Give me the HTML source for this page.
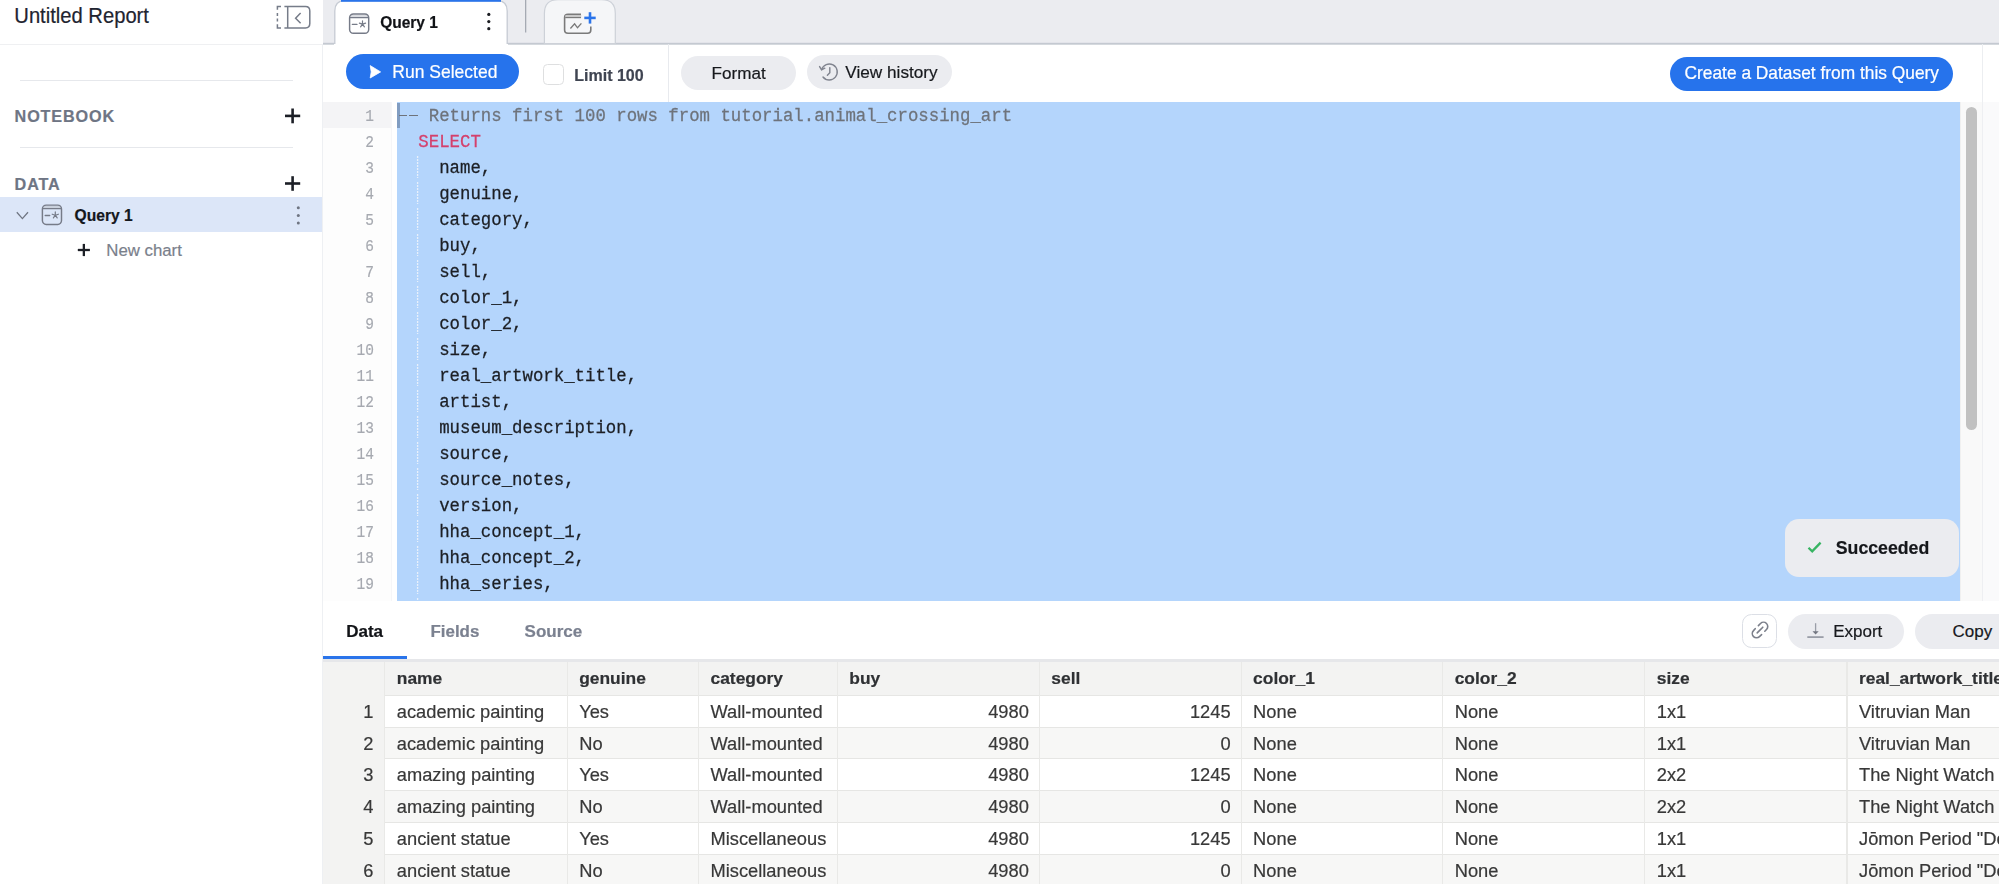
<!DOCTYPE html>
<html><head><meta charset="utf-8">
<style>
*{box-sizing:border-box;margin:0;padding:0}
html,body{width:1999px;height:884px;overflow:hidden;background:#fff;font-family:"Liberation Sans",sans-serif;color:#1f2329}
.a{position:absolute}
.t{position:absolute;white-space:nowrap;line-height:20px;-webkit-text-stroke:0.2px currentColor}
body{-webkit-font-smoothing:antialiased}
#wrap{position:absolute;left:0;top:0;width:1999px;height:884px;opacity:0.999}
.m{position:absolute;white-space:pre;font-family:"Liberation Mono",monospace;line-height:20px;-webkit-text-stroke:0.25px currentColor}
</style></head>
<body><div id="wrap">
<div class="a" style="left:0px;top:0px;width:323px;height:884px;background:#fff;"></div>
<div class="a" style="left:322px;top:44px;width:1px;height:840px;background:#eef0f3;"></div>
<div class="a" style="left:0px;top:43.5px;width:322px;height:1px;background:#eff0f2;"></div>
<div class="a" style="left:20px;top:79.5px;width:273px;height:1.5px;background:#e6e8ec;"></div>
<div class="a" style="left:20px;top:146.5px;width:273px;height:1.5px;background:#e6e8ec;"></div>
<div class="a" style="left:0px;top:197.3px;width:322px;height:34.5px;background:#dce6f8;"></div>
<div class="t" style="left:14.30px;top:6.20px;font-size:20.2px;color:#1f2430;transform:scaleY(1.07);transform-origin:0 17.00px">Untitled Report</div>
<div class="t" style="left:14.60px;top:106.19px;font-size:16.2px;color:#6e7584;font-weight:bold;letter-spacing:0.85px">NOTEBOOK</div>
<div class="t" style="left:14.60px;top:173.89px;font-size:16.2px;color:#6e7584;font-weight:bold;letter-spacing:0.85px">DATA</div>
<div class="t" style="left:74.60px;top:206.19px;font-size:15.6px;color:#14171c;font-weight:bold">Query 1</div>
<div class="t" style="left:106.30px;top:240.98px;font-size:16.8px;color:#7a808b">New chart</div>
<svg class="a" style="left:0;top:0" width="323" height="270" viewBox="0 0 323 270">
  <g stroke="#1c1f26" stroke-width="2.6"><line x1="285" y1="115.9" x2="300.2" y2="115.9"/><line x1="292.6" y1="108.5" x2="292.6" y2="123.3"/></g>
  <g stroke="#1c1f26" stroke-width="2.6"><line x1="285" y1="183.5" x2="300.2" y2="183.5"/><line x1="292.6" y1="176.2" x2="292.6" y2="190.8"/></g>
  <path d="M16.8 212.3 L22.4 218.6 L28 212.3" fill="none" stroke="#6f7582" stroke-width="1.3"/>
  <g transform="translate(-307.2 191.1)"><g fill="none" stroke="#767b88" stroke-linecap="round">
  <rect x="350.6" y="14.7" width="17.4" height="2.6" fill="#c9d0dc" stroke="none"/>
  <rect x="349.6" y="14" width="19.1" height="19.3" rx="3.8" stroke-width="1.45"/>
  <line x1="350.3" y1="17.6" x2="368.2" y2="17.6" stroke-width="1.25"/>
  <line x1="352.4" y1="24.4" x2="356.9" y2="24.4" stroke-width="1.4"/>
  <path d="M362.5 24.1 L362.5 20.8 M362.5 24.1 L365.6 23.1 M362.5 24.1 L364.4 26.8 M362.5 24.1 L360.6 26.8 M362.5 24.1 L359.4 23.1" stroke-width="1.2"/>
</g></g>
  <circle cx="298.3" cy="207.8" r="1.5" fill="#6f7582"/><circle cx="298.3" cy="215.5" r="1.5" fill="#6f7582"/><circle cx="298.3" cy="223" r="1.5" fill="#6f7582"/>
  <g stroke="#1c1f26" stroke-width="2.3"><line x1="77.8" y1="250" x2="89.9" y2="250"/><line x1="83.85" y1="243.9" x2="83.85" y2="256.1"/></g>
  <g fill="none" stroke="#767c89" stroke-width="1.5">
    <path d="M281 6.5 L277.4 6.5 L277.4 9.7 M277.4 13.1 L277.4 16 M277.4 18.4 L277.4 21.4 M277.4 24.2 L277.4 27.9 L281 27.9"/>
    <path d="M284.4 6.6 L305.5 6.6 Q309.8 6.6 309.8 11 L309.8 23.6 Q309.8 28 305.5 28 L284.4 28"/>
    <line x1="287.7" y1="6.6" x2="287.7" y2="28"/>
    <path d="M300.6 13 L295.6 18.2 L300.6 23.2"/>
  </g>
</svg>
<svg class="a" style="left:0;top:0" width="1999" height="46" viewBox="0 0 1999 46">
  <rect x="323" y="0" width="1676" height="44" fill="#ebecf0"/>
  <rect x="323" y="42.8" width="1676" height="1.9" fill="#c4c9d1"/>
  <path d="M334.8 46 L334.8 11 Q334.8 0.6 345 0.6 L497 0.6 Q507.2 0.6 507.2 11 L507.2 46 Z" fill="#fff" stroke="#c6cbd3" stroke-width="1.3"/>
  <rect x="334" y="44" width="174" height="2" fill="#fff"/>
  <rect x="341" y="0" width="160" height="1.8" fill="#2a74ea"/>
  <rect x="525" y="0" width="1.3" height="32.5" fill="#a5aab3"/>
  <path d="M544.4 43.5 L544.4 13.5 Q544.4 -0.3 558 -0.3 L601.7 -0.3 Q615.3 -0.3 615.3 13.5 L615.3 43.5 Z" fill="#f5f6f8" stroke="#cdd1d8" stroke-width="1.2"/>
  <g fill="none" stroke="#767b88" stroke-linecap="round">
  <rect x="350.6" y="14.7" width="17.4" height="2.6" fill="#d9dbe0" stroke="none"/>
  <rect x="349.6" y="14" width="19.1" height="19.3" rx="3.8" stroke-width="1.45"/>
  <line x1="350.3" y1="17.6" x2="368.2" y2="17.6" stroke-width="1.25"/>
  <line x1="352.4" y1="24.4" x2="356.9" y2="24.4" stroke-width="1.4"/>
  <path d="M362.5 24.1 L362.5 20.8 M362.5 24.1 L365.6 23.1 M362.5 24.1 L364.4 26.8 M362.5 24.1 L360.6 26.8 M362.5 24.1 L359.4 23.1" stroke-width="1.2"/>
</g>
  <circle cx="488.8" cy="14.4" r="1.6" fill="#1b1d22"/><circle cx="488.8" cy="21.55" r="1.6" fill="#1b1d22"/><circle cx="488.8" cy="28.7" r="1.6" fill="#1b1d22"/>
  <path d="M581 14.3 L568 14.3 Q564.6 14.3 564.6 17.7 L564.6 30 Q564.6 33.3 568 33.3 L587.6 33.3 Q590.8 33.3 590.8 30 L590.8 26.5" fill="none" stroke="#7a7a7a" stroke-width="1.6"/>
  <rect x="565.4" y="15" width="15.8" height="2.6" fill="#c9c9c9"/>
  <line x1="565.2" y1="17.6" x2="581" y2="17.6" stroke="#7a7a7a" stroke-width="1.15"/>
  <path d="M570.4 28.5 L574.6 23.9 L577.5 27.8 L581.4 23.4" fill="none" stroke="#7a7a7a" stroke-width="1.35"/>
  <g stroke="#2a74ea" stroke-width="2.6"><line x1="584.3" y1="17.9" x2="595.7" y2="17.9"/><line x1="590" y1="12.2" x2="590" y2="23.6"/></g>
</svg>
<div class="t" style="left:380.20px;top:12.63px;font-size:15.5px;color:#111317;transform:scaleY(1.06);transform-origin:0 15.37px;font-weight:bold">Query 1</div>
<div class="a" style="left:345.9px;top:54.4px;width:173.2px;height:35px;background:#2673ec;border-radius:17.5px"></div>
<svg class="a" style="left:367px;top:64px" width="16" height="16" viewBox="0 0 16 16"><path d="M3.2 1.6 L13.6 7.9 L3.2 14.0 L4.2 7.9 Z" fill="#fff" stroke="#fff" stroke-width="0.8" stroke-linejoin="round"/></svg>
<div class="t" style="left:392.30px;top:61.94px;font-size:17.5px;color:#fff">Run Selected</div>
<div class="a" style="left:542.6px;top:63.6px;width:21px;height:21px;background:#fff;border-radius:4.5px;border:1.3px solid #dedfe0"></div>
<div class="t" style="left:574.30px;top:66.46px;font-size:16.0px;color:#3f4451;font-weight:bold">Limit 100</div>
<div class="a" style="left:668px;top:44px;width:1px;height:58px;background:#e8eaee;"></div>
<div class="a" style="left:681px;top:56.3px;width:115px;height:34.2px;background:#ebecf0;border-radius:17.1px"></div>
<div class="t" style="left:711.50px;top:64.37px;font-size:17.1px;color:#17191d">Format</div>
<div class="a" style="left:807.3px;top:54.8px;width:145px;height:34.6px;background:#ebecf0;border-radius:17.3px"></div>
<svg class="a" style="left:817px;top:60px" width="24" height="24" viewBox="0 0 24 24"><g fill="none" stroke="#80848f" stroke-width="1.45" stroke-linecap="round"><path d="M4.6 9.6 A8 8 0 1 1 6 17"/><path d="M2.6 6.6 L4.6 9.8 L7.8 8.2"/><path d="M12.8 7.6 L12.8 12.8 L10.4 15.2"/></g></svg>
<div class="t" style="left:845.30px;top:62.04px;font-size:17.2px;color:#17191d">View history</div>
<div class="a" style="left:1670px;top:56.6px;width:283px;height:34.3px;background:#2673ec;border-radius:17.2px"></div>
<div class="t" style="left:1684.50px;top:63.29px;font-size:17.35px;color:#fff;transform:scaleY(1.07);transform-origin:0 16.01px">Create a Dataset from this Query</div>
<div class="a" style="left:1982px;top:44px;width:1px;height:58px;background:#eceef1;"></div>
<div class="a" style="left:323px;top:102px;width:69px;height:499px;background:#fdfdfd;"></div>
<div class="a" style="left:323px;top:102px;width:69px;height:26px;background:#f4f4f6;"></div>
<div class="a" style="left:391px;top:102px;width:1px;height:499px;background:#f6f6f8;"></div>
<div class="a" style="left:397px;top:102px;width:1563px;height:499px;background:#b4d5fc;"></div>
<div class="a" style="left:0;top:102px;width:1999px;height:499px;overflow:hidden">
<div class="m" style="right:1625.00px;top:5.14px;font-size:14.5px;color:#a6a9b0;transform:scaleY(1.16);transform-origin:0 13.86px;-webkit-text-stroke:0.15px currentColor">1</div>
<div class="m" style="left:397.5px;top:4.88px;font-size:17.37px;color:#6e737b;transform:scaleY(1.07);transform-origin:0 14.62px">   Returns first 100 rows from tutorial.animal_crossing_art</div>
<div class="m" style="right:1625.00px;top:31.14px;font-size:14.5px;color:#a6a9b0;transform:scaleY(1.16);transform-origin:0 13.86px;-webkit-text-stroke:0.15px currentColor">2</div>
<div class="m" style="left:397.5px;top:30.88px;font-size:17.37px;color:#d4406c;transform:scaleY(1.07);transform-origin:0 14.62px">  SELECT</div>
<div class="m" style="right:1625.00px;top:57.14px;font-size:14.5px;color:#a6a9b0;transform:scaleY(1.16);transform-origin:0 13.86px;-webkit-text-stroke:0.15px currentColor">3</div>
<div class="m" style="left:397.5px;top:56.88px;font-size:17.37px;color:#1c1f24;transform:scaleY(1.07);transform-origin:0 14.62px">    name,</div>
<svg class="a" style="left:416px;top:54px" width="4" height="22"><line x1="1.6" y1="0" x2="1.6" y2="22" stroke="#e8f0fb" stroke-width="1.3" stroke-dasharray="2 1"/></svg>
<div class="m" style="right:1625.00px;top:83.14px;font-size:14.5px;color:#a6a9b0;transform:scaleY(1.16);transform-origin:0 13.86px;-webkit-text-stroke:0.15px currentColor">4</div>
<div class="m" style="left:397.5px;top:82.88px;font-size:17.37px;color:#1c1f24;transform:scaleY(1.07);transform-origin:0 14.62px">    genuine,</div>
<svg class="a" style="left:416px;top:80px" width="4" height="22"><line x1="1.6" y1="0" x2="1.6" y2="22" stroke="#e8f0fb" stroke-width="1.3" stroke-dasharray="2 1"/></svg>
<div class="m" style="right:1625.00px;top:109.14px;font-size:14.5px;color:#a6a9b0;transform:scaleY(1.16);transform-origin:0 13.86px;-webkit-text-stroke:0.15px currentColor">5</div>
<div class="m" style="left:397.5px;top:108.88px;font-size:17.37px;color:#1c1f24;transform:scaleY(1.07);transform-origin:0 14.62px">    category,</div>
<svg class="a" style="left:416px;top:106px" width="4" height="22"><line x1="1.6" y1="0" x2="1.6" y2="22" stroke="#e8f0fb" stroke-width="1.3" stroke-dasharray="2 1"/></svg>
<div class="m" style="right:1625.00px;top:135.14px;font-size:14.5px;color:#a6a9b0;transform:scaleY(1.16);transform-origin:0 13.86px;-webkit-text-stroke:0.15px currentColor">6</div>
<div class="m" style="left:397.5px;top:134.88px;font-size:17.37px;color:#1c1f24;transform:scaleY(1.07);transform-origin:0 14.62px">    buy,</div>
<svg class="a" style="left:416px;top:132px" width="4" height="22"><line x1="1.6" y1="0" x2="1.6" y2="22" stroke="#e8f0fb" stroke-width="1.3" stroke-dasharray="2 1"/></svg>
<div class="m" style="right:1625.00px;top:161.14px;font-size:14.5px;color:#a6a9b0;transform:scaleY(1.16);transform-origin:0 13.86px;-webkit-text-stroke:0.15px currentColor">7</div>
<div class="m" style="left:397.5px;top:160.88px;font-size:17.37px;color:#1c1f24;transform:scaleY(1.07);transform-origin:0 14.62px">    sell,</div>
<svg class="a" style="left:416px;top:158px" width="4" height="22"><line x1="1.6" y1="0" x2="1.6" y2="22" stroke="#e8f0fb" stroke-width="1.3" stroke-dasharray="2 1"/></svg>
<div class="m" style="right:1625.00px;top:187.14px;font-size:14.5px;color:#a6a9b0;transform:scaleY(1.16);transform-origin:0 13.86px;-webkit-text-stroke:0.15px currentColor">8</div>
<div class="m" style="left:397.5px;top:186.88px;font-size:17.37px;color:#1c1f24;transform:scaleY(1.07);transform-origin:0 14.62px">    color_1,</div>
<svg class="a" style="left:416px;top:184px" width="4" height="22"><line x1="1.6" y1="0" x2="1.6" y2="22" stroke="#e8f0fb" stroke-width="1.3" stroke-dasharray="2 1"/></svg>
<div class="m" style="right:1625.00px;top:213.14px;font-size:14.5px;color:#a6a9b0;transform:scaleY(1.16);transform-origin:0 13.86px;-webkit-text-stroke:0.15px currentColor">9</div>
<div class="m" style="left:397.5px;top:212.88px;font-size:17.37px;color:#1c1f24;transform:scaleY(1.07);transform-origin:0 14.62px">    color_2,</div>
<svg class="a" style="left:416px;top:210px" width="4" height="22"><line x1="1.6" y1="0" x2="1.6" y2="22" stroke="#e8f0fb" stroke-width="1.3" stroke-dasharray="2 1"/></svg>
<div class="m" style="right:1625.00px;top:239.14px;font-size:14.5px;color:#a6a9b0;transform:scaleY(1.16);transform-origin:0 13.86px;-webkit-text-stroke:0.15px currentColor">10</div>
<div class="m" style="left:397.5px;top:238.88px;font-size:17.37px;color:#1c1f24;transform:scaleY(1.07);transform-origin:0 14.62px">    size,</div>
<svg class="a" style="left:416px;top:236px" width="4" height="22"><line x1="1.6" y1="0" x2="1.6" y2="22" stroke="#e8f0fb" stroke-width="1.3" stroke-dasharray="2 1"/></svg>
<div class="m" style="right:1625.00px;top:265.14px;font-size:14.5px;color:#a6a9b0;transform:scaleY(1.16);transform-origin:0 13.86px;-webkit-text-stroke:0.15px currentColor">11</div>
<div class="m" style="left:397.5px;top:264.88px;font-size:17.37px;color:#1c1f24;transform:scaleY(1.07);transform-origin:0 14.62px">    real_artwork_title,</div>
<svg class="a" style="left:416px;top:262px" width="4" height="22"><line x1="1.6" y1="0" x2="1.6" y2="22" stroke="#e8f0fb" stroke-width="1.3" stroke-dasharray="2 1"/></svg>
<div class="m" style="right:1625.00px;top:291.14px;font-size:14.5px;color:#a6a9b0;transform:scaleY(1.16);transform-origin:0 13.86px;-webkit-text-stroke:0.15px currentColor">12</div>
<div class="m" style="left:397.5px;top:290.88px;font-size:17.37px;color:#1c1f24;transform:scaleY(1.07);transform-origin:0 14.62px">    artist,</div>
<svg class="a" style="left:416px;top:288px" width="4" height="22"><line x1="1.6" y1="0" x2="1.6" y2="22" stroke="#e8f0fb" stroke-width="1.3" stroke-dasharray="2 1"/></svg>
<div class="m" style="right:1625.00px;top:317.14px;font-size:14.5px;color:#a6a9b0;transform:scaleY(1.16);transform-origin:0 13.86px;-webkit-text-stroke:0.15px currentColor">13</div>
<div class="m" style="left:397.5px;top:316.88px;font-size:17.37px;color:#1c1f24;transform:scaleY(1.07);transform-origin:0 14.62px">    museum_description,</div>
<svg class="a" style="left:416px;top:314px" width="4" height="22"><line x1="1.6" y1="0" x2="1.6" y2="22" stroke="#e8f0fb" stroke-width="1.3" stroke-dasharray="2 1"/></svg>
<div class="m" style="right:1625.00px;top:343.14px;font-size:14.5px;color:#a6a9b0;transform:scaleY(1.16);transform-origin:0 13.86px;-webkit-text-stroke:0.15px currentColor">14</div>
<div class="m" style="left:397.5px;top:342.88px;font-size:17.37px;color:#1c1f24;transform:scaleY(1.07);transform-origin:0 14.62px">    source,</div>
<svg class="a" style="left:416px;top:340px" width="4" height="22"><line x1="1.6" y1="0" x2="1.6" y2="22" stroke="#e8f0fb" stroke-width="1.3" stroke-dasharray="2 1"/></svg>
<div class="m" style="right:1625.00px;top:369.14px;font-size:14.5px;color:#a6a9b0;transform:scaleY(1.16);transform-origin:0 13.86px;-webkit-text-stroke:0.15px currentColor">15</div>
<div class="m" style="left:397.5px;top:368.88px;font-size:17.37px;color:#1c1f24;transform:scaleY(1.07);transform-origin:0 14.62px">    source_notes,</div>
<svg class="a" style="left:416px;top:366px" width="4" height="22"><line x1="1.6" y1="0" x2="1.6" y2="22" stroke="#e8f0fb" stroke-width="1.3" stroke-dasharray="2 1"/></svg>
<div class="m" style="right:1625.00px;top:395.14px;font-size:14.5px;color:#a6a9b0;transform:scaleY(1.16);transform-origin:0 13.86px;-webkit-text-stroke:0.15px currentColor">16</div>
<div class="m" style="left:397.5px;top:394.88px;font-size:17.37px;color:#1c1f24;transform:scaleY(1.07);transform-origin:0 14.62px">    version,</div>
<svg class="a" style="left:416px;top:392px" width="4" height="22"><line x1="1.6" y1="0" x2="1.6" y2="22" stroke="#e8f0fb" stroke-width="1.3" stroke-dasharray="2 1"/></svg>
<div class="m" style="right:1625.00px;top:421.14px;font-size:14.5px;color:#a6a9b0;transform:scaleY(1.16);transform-origin:0 13.86px;-webkit-text-stroke:0.15px currentColor">17</div>
<div class="m" style="left:397.5px;top:420.88px;font-size:17.37px;color:#1c1f24;transform:scaleY(1.07);transform-origin:0 14.62px">    hha_concept_1,</div>
<svg class="a" style="left:416px;top:418px" width="4" height="22"><line x1="1.6" y1="0" x2="1.6" y2="22" stroke="#e8f0fb" stroke-width="1.3" stroke-dasharray="2 1"/></svg>
<div class="m" style="right:1625.00px;top:447.14px;font-size:14.5px;color:#a6a9b0;transform:scaleY(1.16);transform-origin:0 13.86px;-webkit-text-stroke:0.15px currentColor">18</div>
<div class="m" style="left:397.5px;top:446.88px;font-size:17.37px;color:#1c1f24;transform:scaleY(1.07);transform-origin:0 14.62px">    hha_concept_2,</div>
<svg class="a" style="left:416px;top:444px" width="4" height="22"><line x1="1.6" y1="0" x2="1.6" y2="22" stroke="#e8f0fb" stroke-width="1.3" stroke-dasharray="2 1"/></svg>
<div class="m" style="right:1625.00px;top:473.14px;font-size:14.5px;color:#a6a9b0;transform:scaleY(1.16);transform-origin:0 13.86px;-webkit-text-stroke:0.15px currentColor">19</div>
<div class="m" style="left:397.5px;top:472.88px;font-size:17.37px;color:#1c1f24;transform:scaleY(1.07);transform-origin:0 14.62px">    hha_series,</div>
<svg class="a" style="left:416px;top:470px" width="4" height="22"><line x1="1.6" y1="0" x2="1.6" y2="22" stroke="#e8f0fb" stroke-width="1.3" stroke-dasharray="2 1"/></svg>
<div class="m" style="right:1625.00px;top:499.14px;font-size:14.5px;color:#a6a9b0;transform:scaleY(1.16);transform-origin:0 13.86px;-webkit-text-stroke:0.15px currentColor">20</div>
<div class="m" style="left:397.5px;top:498.88px;font-size:17.37px;color:#1c1f24;transform:scaleY(1.07);transform-origin:0 14.62px">    hha_set,</div>
<svg class="a" style="left:416px;top:496px" width="4" height="22"><line x1="1.6" y1="0" x2="1.6" y2="22" stroke="#e8f0fb" stroke-width="1.3" stroke-dasharray="2 1"/></svg>
</div>
<div class="a" style="left:397.4px;top:102.8px;width:2.4px;height:25.4px;background:rgba(60,80,115,0.42);"></div>
<div class="a" style="left:398.5px;top:114.6px;width:8.4px;height:1.5px;background:#6e737b;"></div>
<div class="a" style="left:409px;top:114.6px;width:8.6px;height:1.5px;background:#6e737b;"></div>
<div class="a" style="left:1960px;top:102px;width:22px;height:499px;background:#f9f9f9;border-left:1px solid #f0f0f0"></div>
<div class="a" style="left:1966px;top:107px;width:11px;height:323px;background:#c1c1c1;border-radius:6px"></div>
<div class="a" style="left:1982px;top:102px;width:17px;height:499px;background:#fafafb;border-left:1px solid #eeeff2"></div>
<div class="a" style="left:1785.2px;top:519px;width:173.8px;height:57.5px;background:#ebecf0;border-radius:14px"></div>
<svg class="a" style="left:1807px;top:539px" width="16" height="16" viewBox="0 0 16 16"><path d="M1.5 8.8 L5.2 12.4 L13.6 3.6" fill="none" stroke="#38b463" stroke-width="2.3"/></svg>
<div class="t" style="left:1835.80px;top:538.17px;font-size:17.7px;color:#15171b;font-weight:bold">Succeeded</div>
<div class="a" style="left:323px;top:601px;width:1676px;height:58px;background:#fff;"></div>
<div class="t" style="left:346.20px;top:622.11px;font-size:17.0px;color:#111317;font-weight:bold">Data</div>
<div class="t" style="left:430.50px;top:622.14px;font-size:16.9px;color:#7b8190;font-weight:bold">Fields</div>
<div class="t" style="left:524.60px;top:622.11px;font-size:17.0px;color:#7b8190;font-weight:bold">Source</div>
<div class="a" style="left:323px;top:656px;width:84px;height:3px;background:#2a74ea;"></div>
<div class="a" style="left:1742.2px;top:614px;width:35px;height:33.8px;background:#fff;border-radius:9.5px;border:1.3px solid #dcdfe6"></div>
<svg class="a" style="left:1749px;top:620px" width="22" height="22" viewBox="0 0 22 22"><g fill="none" stroke="#7b7f8a" stroke-width="1.6" stroke-linecap="round"><path d="M9.4 5.6 L11.5 3.5 A4.2 4.2 0 0 1 17.5 9.5 L15.8 11.2"/><path d="M12.6 14.6 L10.47 16.57 A4.2 4.2 0 0 1 4.53 10.63 L6.2 8.7"/><line x1="8.2" y1="12.9" x2="13.8" y2="7.2"/></g></svg>
<div class="a" style="left:1788px;top:613.5px;width:116px;height:35px;background:#ebecf0;border-radius:17.5px"></div>
<svg class="a" style="left:1805px;top:620px" width="20" height="20" viewBox="0 0 20 20"><line x1="10.6" y1="3.2" x2="10.6" y2="12" stroke="#9a9ea8" stroke-width="1.3"/><path d="M7.5 11.3 L13.7 11.3 L10.6 14.4 Z" fill="#737782"/><line x1="2.3" y1="17.1" x2="18.6" y2="17.1" stroke="#9a9ea8" stroke-width="1.8"/></svg>
<div class="t" style="left:1833.20px;top:622.21px;font-size:17.0px;color:#17191d">Export</div>
<div class="a" style="left:1915px;top:613.5px;width:130px;height:35px;background:#ebecf0;border-radius:17.5px"></div>
<div class="t" style="left:1952.50px;top:622.41px;font-size:17.0px;color:#17191d">Copy</div>
<div class="a" style="left:323px;top:659px;width:1676px;height:2.6px;background:#e6e7ea;"></div>
<div class="a" style="left:323px;top:661.5px;width:1676px;height:33px;background:#f3f3f2;"></div>
<div class="a" style="left:323px;top:661.5px;width:61.8px;height:223px;background:#f3f3f2;"></div>
<div class="a" style="left:384.8px;top:695px;width:1615px;height:33px;background:#ffffff;"></div>
<div class="a" style="left:384.8px;top:727px;width:1615px;height:33px;background:#f7f7f6;"></div>
<div class="a" style="left:384.8px;top:758px;width:1615px;height:33px;background:#ffffff;"></div>
<div class="a" style="left:384.8px;top:790px;width:1615px;height:33px;background:#f7f7f6;"></div>
<div class="a" style="left:384.8px;top:822px;width:1615px;height:33px;background:#ffffff;"></div>
<div class="a" style="left:384.8px;top:854px;width:1615px;height:33px;background:#f7f7f6;"></div>
<div class="a" style="left:384.8px;top:694.5px;width:1615px;height:1px;background:#e6e6e4;"></div>
<div class="a" style="left:384.8px;top:726.5px;width:1615px;height:1px;background:#e6e6e4;"></div>
<div class="a" style="left:384.8px;top:757.5px;width:1615px;height:1px;background:#e6e6e4;"></div>
<div class="a" style="left:384.8px;top:789.5px;width:1615px;height:1px;background:#e6e6e4;"></div>
<div class="a" style="left:384.8px;top:821.5px;width:1615px;height:1px;background:#e6e6e4;"></div>
<div class="a" style="left:384.8px;top:853.5px;width:1615px;height:1px;background:#e6e6e4;"></div>
<div class="a" style="left:384.2px;top:661.5px;width:1.2px;height:223px;background:#e9e9e7;"></div>
<div class="a" style="left:566.6px;top:661.5px;width:1.2px;height:223px;background:#e9e9e7;"></div>
<div class="a" style="left:697.9px;top:661.5px;width:1.2px;height:223px;background:#e9e9e7;"></div>
<div class="a" style="left:836.7px;top:661.5px;width:1.2px;height:223px;background:#e9e9e7;"></div>
<div class="a" style="left:1038.7px;top:661.5px;width:1.2px;height:223px;background:#e9e9e7;"></div>
<div class="a" style="left:1240.5px;top:661.5px;width:1.2px;height:223px;background:#e9e9e7;"></div>
<div class="a" style="left:1442.1px;top:661.5px;width:1.2px;height:223px;background:#e9e9e7;"></div>
<div class="a" style="left:1644.2px;top:661.5px;width:1.2px;height:223px;background:#e9e9e7;"></div>
<div class="a" style="left:1846.4px;top:661.5px;width:1.2px;height:223px;background:#e9e9e7;"></div>
<div class="t" style="left:396.80px;top:667.57px;font-size:17.4px;color:#2f3134;font-weight:bold">name</div>
<div class="t" style="left:579.20px;top:667.57px;font-size:17.4px;color:#2f3134;font-weight:bold">genuine</div>
<div class="t" style="left:710.50px;top:667.57px;font-size:17.4px;color:#2f3134;font-weight:bold">category</div>
<div class="t" style="left:849.30px;top:667.57px;font-size:17.4px;color:#2f3134;font-weight:bold">buy</div>
<div class="t" style="left:1051.30px;top:667.57px;font-size:17.4px;color:#2f3134;font-weight:bold">sell</div>
<div class="t" style="left:1253.10px;top:667.57px;font-size:17.4px;color:#2f3134;font-weight:bold">color_1</div>
<div class="t" style="left:1454.70px;top:667.57px;font-size:17.4px;color:#2f3134;font-weight:bold">color_2</div>
<div class="t" style="left:1656.80px;top:667.57px;font-size:17.4px;color:#2f3134;font-weight:bold">size</div>
<div class="t" style="left:1859.00px;top:667.57px;font-size:17.4px;color:#2f3134;font-weight:bold">real_artwork_title</div>
<div class="t" style="right:1625.50px;top:701.96px;font-size:18.3px;color:#383838">1</div>
<div class="t" style="left:396.80px;top:701.96px;font-size:18.3px;color:#383838">academic painting</div>
<div class="t" style="left:579.20px;top:701.96px;font-size:18.3px;color:#383838">Yes</div>
<div class="t" style="left:710.50px;top:701.96px;font-size:18.3px;color:#383838">Wall-mounted</div>
<div class="t" style="right:970.20px;top:701.96px;font-size:18.3px;color:#383838">4980</div>
<div class="t" style="right:768.40px;top:701.96px;font-size:18.3px;color:#383838">1245</div>
<div class="t" style="left:1253.10px;top:701.96px;font-size:18.3px;color:#383838">None</div>
<div class="t" style="left:1454.70px;top:701.96px;font-size:18.3px;color:#383838">None</div>
<div class="t" style="left:1656.80px;top:701.96px;font-size:18.3px;color:#383838">1x1</div>
<div class="t" style="left:1859.00px;top:701.96px;font-size:18.3px;color:#383838">Vitruvian Man</div>
<div class="t" style="right:1625.50px;top:733.71px;font-size:18.3px;color:#383838">2</div>
<div class="t" style="left:396.80px;top:733.71px;font-size:18.3px;color:#383838">academic painting</div>
<div class="t" style="left:579.20px;top:733.71px;font-size:18.3px;color:#383838">No</div>
<div class="t" style="left:710.50px;top:733.71px;font-size:18.3px;color:#383838">Wall-mounted</div>
<div class="t" style="right:970.20px;top:733.71px;font-size:18.3px;color:#383838">4980</div>
<div class="t" style="right:768.40px;top:733.71px;font-size:18.3px;color:#383838">0</div>
<div class="t" style="left:1253.10px;top:733.71px;font-size:18.3px;color:#383838">None</div>
<div class="t" style="left:1454.70px;top:733.71px;font-size:18.3px;color:#383838">None</div>
<div class="t" style="left:1656.80px;top:733.71px;font-size:18.3px;color:#383838">1x1</div>
<div class="t" style="left:1859.00px;top:733.71px;font-size:18.3px;color:#383838">Vitruvian Man</div>
<div class="t" style="right:1625.50px;top:765.46px;font-size:18.3px;color:#383838">3</div>
<div class="t" style="left:396.80px;top:765.46px;font-size:18.3px;color:#383838">amazing painting</div>
<div class="t" style="left:579.20px;top:765.46px;font-size:18.3px;color:#383838">Yes</div>
<div class="t" style="left:710.50px;top:765.46px;font-size:18.3px;color:#383838">Wall-mounted</div>
<div class="t" style="right:970.20px;top:765.46px;font-size:18.3px;color:#383838">4980</div>
<div class="t" style="right:768.40px;top:765.46px;font-size:18.3px;color:#383838">1245</div>
<div class="t" style="left:1253.10px;top:765.46px;font-size:18.3px;color:#383838">None</div>
<div class="t" style="left:1454.70px;top:765.46px;font-size:18.3px;color:#383838">None</div>
<div class="t" style="left:1656.80px;top:765.46px;font-size:18.3px;color:#383838">2x2</div>
<div class="t" style="left:1859.00px;top:765.46px;font-size:18.3px;color:#383838">The Night Watch</div>
<div class="t" style="right:1625.50px;top:797.21px;font-size:18.3px;color:#383838">4</div>
<div class="t" style="left:396.80px;top:797.21px;font-size:18.3px;color:#383838">amazing painting</div>
<div class="t" style="left:579.20px;top:797.21px;font-size:18.3px;color:#383838">No</div>
<div class="t" style="left:710.50px;top:797.21px;font-size:18.3px;color:#383838">Wall-mounted</div>
<div class="t" style="right:970.20px;top:797.21px;font-size:18.3px;color:#383838">4980</div>
<div class="t" style="right:768.40px;top:797.21px;font-size:18.3px;color:#383838">0</div>
<div class="t" style="left:1253.10px;top:797.21px;font-size:18.3px;color:#383838">None</div>
<div class="t" style="left:1454.70px;top:797.21px;font-size:18.3px;color:#383838">None</div>
<div class="t" style="left:1656.80px;top:797.21px;font-size:18.3px;color:#383838">2x2</div>
<div class="t" style="left:1859.00px;top:797.21px;font-size:18.3px;color:#383838">The Night Watch</div>
<div class="t" style="right:1625.50px;top:828.96px;font-size:18.3px;color:#383838">5</div>
<div class="t" style="left:396.80px;top:828.96px;font-size:18.3px;color:#383838">ancient statue</div>
<div class="t" style="left:579.20px;top:828.96px;font-size:18.3px;color:#383838">Yes</div>
<div class="t" style="left:710.50px;top:828.96px;font-size:18.3px;color:#383838">Miscellaneous</div>
<div class="t" style="right:970.20px;top:828.96px;font-size:18.3px;color:#383838">4980</div>
<div class="t" style="right:768.40px;top:828.96px;font-size:18.3px;color:#383838">1245</div>
<div class="t" style="left:1253.10px;top:828.96px;font-size:18.3px;color:#383838">None</div>
<div class="t" style="left:1454.70px;top:828.96px;font-size:18.3px;color:#383838">None</div>
<div class="t" style="left:1656.80px;top:828.96px;font-size:18.3px;color:#383838">1x1</div>
<div class="t" style="left:1859.00px;top:828.96px;font-size:18.3px;color:#383838">Jōmon Period &quot;Dogū&quot;</div>
<div class="t" style="right:1625.50px;top:860.71px;font-size:18.3px;color:#383838">6</div>
<div class="t" style="left:396.80px;top:860.71px;font-size:18.3px;color:#383838">ancient statue</div>
<div class="t" style="left:579.20px;top:860.71px;font-size:18.3px;color:#383838">No</div>
<div class="t" style="left:710.50px;top:860.71px;font-size:18.3px;color:#383838">Miscellaneous</div>
<div class="t" style="right:970.20px;top:860.71px;font-size:18.3px;color:#383838">4980</div>
<div class="t" style="right:768.40px;top:860.71px;font-size:18.3px;color:#383838">0</div>
<div class="t" style="left:1253.10px;top:860.71px;font-size:18.3px;color:#383838">None</div>
<div class="t" style="left:1454.70px;top:860.71px;font-size:18.3px;color:#383838">None</div>
<div class="t" style="left:1656.80px;top:860.71px;font-size:18.3px;color:#383838">1x1</div>
<div class="t" style="left:1859.00px;top:860.71px;font-size:18.3px;color:#383838">Jōmon Period &quot;Dogū&quot;</div>
</div></body></html>
